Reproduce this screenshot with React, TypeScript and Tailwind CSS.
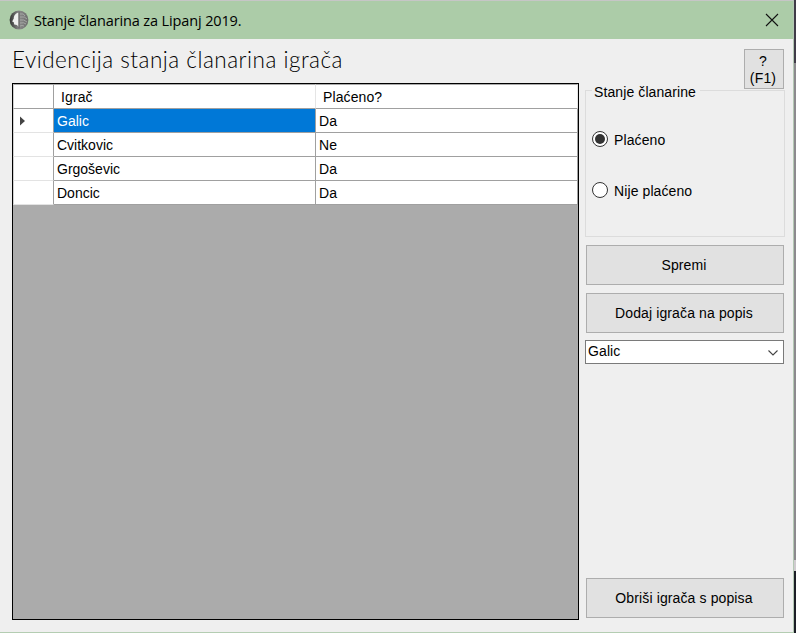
import type { ReactNode } from 'react';

const players = [
  { name: 'Galic', paid: 'Da' },
  { name: 'Cvitkovic', paid: 'Ne' },
  { name: 'Grgoševic', paid: 'Da' },
  { name: 'Doncic', paid: 'Da' },
];

function AppIcon() {
  return (
    <svg width="20" height="20" viewBox="0 0 20 20" className="shrink-0">
      <defs>
        <linearGradient id="ball" x1="0" x2="1">
          <stop offset="0" stopColor="#333633" />
          <stop offset="0.5" stopColor="#8a8a8a" />
          <stop offset="1" stopColor="#6c6c6c" />
        </linearGradient>
      </defs>
      <circle cx="10" cy="10" r="9.4" fill="url(#ball)" />
      <path d="M9.5 2.5 C6 3.5 4.8 6 4.8 8.5 L3.2 11.5 L4.8 12.3 L5.2 14.5 L8 15 L9.5 17Z" fill="#eef0ee" />
      <path d="M10 1.5 V18.5" stroke="#555" strokeWidth="0.8" />
      <path d="M11 4 Q15 3 16 6 M11 7 Q16 6 18 9 M11 10 Q15 9 18 12 M11 13 Q15 12 17 14 M11 16 Q13 15 15 16" stroke="#a9aba9" strokeWidth="0.9" fill="none" />
    </svg>
  );
}

function Button({ children, className = '' }: { children: ReactNode; className?: string }) {
  return (
    <button className={`ml-px block h-10 w-[198px] shrink-0 border border-[#adadad] bg-[#e1e1e1] pr-[2px] pb-px text-center tracking-[0.12px] ${className}`}>
      {children}
    </button>
  );
}

function Radio({ label, checked }: { label: string; checked?: boolean }) {
  return (
    <div className="flex h-4 items-center">
      <span className="flex size-4 items-center justify-center rounded-full border border-[#333] bg-white">
        {checked && <span className="size-2.5 rounded-full bg-[#333]" />}
      </span>
      <span className="ml-1.5 pt-px whitespace-nowrap">{label}</span>
    </div>
  );
}

export default function App() {
  return (
    <div className="flex h-[633px] w-[796px] overflow-hidden bg-[#efefef] font-['Liberation_Sans',Arial,sans-serif] text-[14px] leading-4 tracking-[0.1px] text-black">
      <div className="flex w-[794px] flex-col border-r border-b border-r-[#b4c8b4] border-b-[#b4cdb2]">
        <header className="flex h-[39px] shrink-0 items-center border-t border-[#c6c6c6] bg-[#accca8] pl-[9px]">
          <AppIcon />
          <h1 className="ml-[5px] pt-0.5 whitespace-nowrap font-['Open_Sans',sans-serif] text-[14.5px] tracking-[-0.13px]">Stanje članarina za Lipanj 2019.</h1>
          <svg width="14" height="14" viewBox="0 0 14 14" className="mr-[14px] ml-auto">
            <path d="M1 1 L13 13 M13 1 L1 13" stroke="#111" strokeWidth="1.1" />
          </svg>
        </header>

        <main className="flex min-h-0 flex-1 pl-3">
          <section className="w-[567px] shrink-0">
            <h2 className="h-11 whitespace-nowrap pt-[7px] font-['Lato',sans-serif] text-[22.5px] leading-7 font-light tracking-[0.5px]">Evidencija stanja članarina igrača</h2>
            <div className="h-[537px] border border-black bg-[#ababab]">
              <div className="grid grid-cols-[41px_262px_262px]">
                <div className="h-[25px] border-t border-r border-b border-l border-[#a0a0a0] border-t-[#ababab] border-l-[#d0d0d0] bg-white" />
                <div className="border-t border-r border-b border-t-[#ababab] border-r-[#e5e5e5] border-b-[#a0a0a0] bg-white pt-1 pl-[7px]">Igrač</div>
                <div className="border-t border-r border-b border-t-[#ababab] border-r-[#e5e5e5] border-b-[#a0a0a0] bg-white pt-1 pl-[7px]">Plaćeno?</div>
              </div>
              {players.map((p, i) => (
                <div key={p.name} className="grid h-6 grid-cols-[41px_262px_262px]">
                  <div className="flex items-center border-r border-b border-l border-r-[#a0a0a0] border-b-[#e3e3e3] border-l-[#d0d0d0] bg-white pl-[6px]">
                    {i === 0 && (
                      <svg width="5" height="10" viewBox="0 0 5 10">
                        <path d="M0 0.5 L5 5 L0 9.5Z" fill="#444" />
                      </svg>
                    )}
                  </div>
                  <div className={`border-r border-b border-[#a0a0a0] pt-1 pl-[3px] tracking-normal ${i === 0 ? 'bg-[#0078d7] text-white' : 'bg-white'}`}>{p.name}</div>
                  <div className="border-r border-b border-[#a0a0a0] bg-white pt-1 pl-[3px]">{p.paid}</div>
                </div>
              ))}
            </div>
          </section>

          <aside className="ml-1.5 flex w-[199px] shrink-0 flex-col pt-[10px]">
            <button className="ml-auto h-10 w-10 shrink-0 border border-[#adadad] bg-[#e1e1e1] pt-px pr-[2px] leading-[17px] tracking-[0.2px]">
              ?<br />(F1)
            </button>
            <div className="mt-px flex h-[147px] w-[200px] shrink-0 flex-col border border-[#dcdcdc] pl-1.5">
              <span className="-mt-[7px] w-[108px] bg-[#efefef] px-0.5 whitespace-nowrap">Stanje članarine</span>
              <div className="mt-[31px] flex flex-col gap-[35px]">
                <Radio label="Plaćeno" checked />
                <Radio label="Nije plaćeno" />
              </div>
            </div>
            <Button className="mt-2">Spremi</Button>
            <Button className="mt-2">Dodaj igrača na popis</Button>
            <div className="mt-[7px] flex h-6 shrink-0 items-center border border-[#7a7a7a] bg-white pr-[5px] pl-0.5">
              <span className="pb-0.5">Galic</span>
              <svg width="10" height="6" viewBox="0 0 10 6" className="mt-px ml-auto">
                <path d="M0.5 0.5 L5 5 L9.5 0.5" fill="none" stroke="#444" strokeWidth="1.1" />
              </svg>
            </div>
            <Button className="mt-auto mb-[14px]">Obriši igrača s popisa</Button>
          </aside>
        </main>
      </div>
      <div className="flex w-0.5 flex-col">
        <div className="h-[63px] bg-[#403c48]" />
        <div className="h-[497px] bg-[#8c8a8e]" />
        <div className="h-[11px] bg-[#d0ccd0]" />
        <div className="flex-1 bg-[#1c1e26]" />
      </div>
    </div>
  );
}
